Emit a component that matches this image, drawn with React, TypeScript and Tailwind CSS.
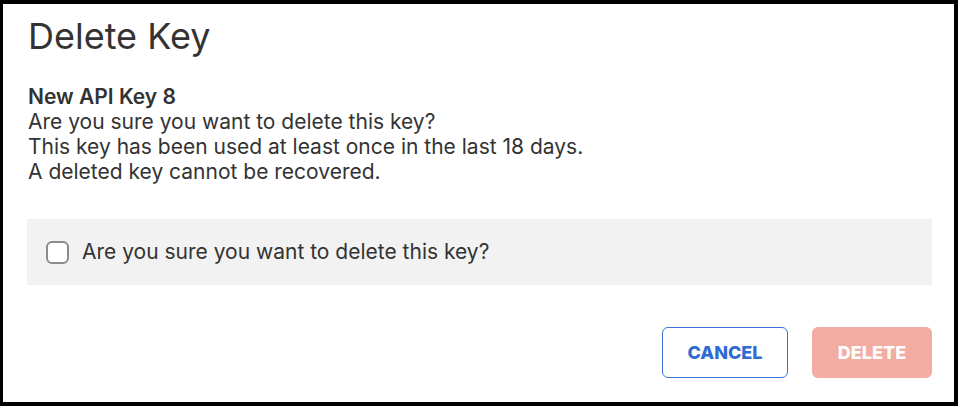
import React from "react";

export default function App() {
  return (
    <div className="w-[958px] h-[406px] bg-black pt-[4px] pl-[3px] pr-[4px] pb-[4px] overflow-hidden [font-family:Inter,'Noto_Sans',sans-serif]">
      <div className="w-full h-full bg-white flex flex-col text-[#333333]">
        <h1 className="text-[36px] leading-[40px] ml-[25px] mt-[12px] font-normal">
          Delete Key
        </h1>
        <div className="ml-[25px] mt-[28px] text-[21px] leading-[25px]">
          <div className="font-semibold">New API Key 8</div>
          <div>Are you sure you want to delete this key?</div>
          <div>This key has been used at least once in the last 18 days.</div>
          <div>A deleted key cannot be recovered.</div>
        </div>
        <div className="ml-[24px] mr-[22px] mt-[35px] h-[66px] bg-[#f2f2f2] flex items-center pl-[19px]">
          <div className="w-[23px] h-[23px] border-[2.5px] border-[#8c8c8c] rounded-[6px] bg-white"></div>
          <span className="ml-[13px] text-[21px]">Are you sure you want to delete this key?</span>
        </div>
        <div className="flex justify-end mt-[42px] mr-[22px] gap-[24px]">
          <button className="w-[126px] h-[51px] border-[1.5px] border-[#3a74d8] rounded-[6px] text-[#2f6bd4] font-extrabold text-[18px] bg-white">
            CANCEL
          </button>
          <button className="w-[120px] h-[51px] rounded-[6px] bg-[#f2aca2] text-white font-extrabold text-[18px]">
            DELETE
          </button>
        </div>
      </div>
    </div>
  );
}
